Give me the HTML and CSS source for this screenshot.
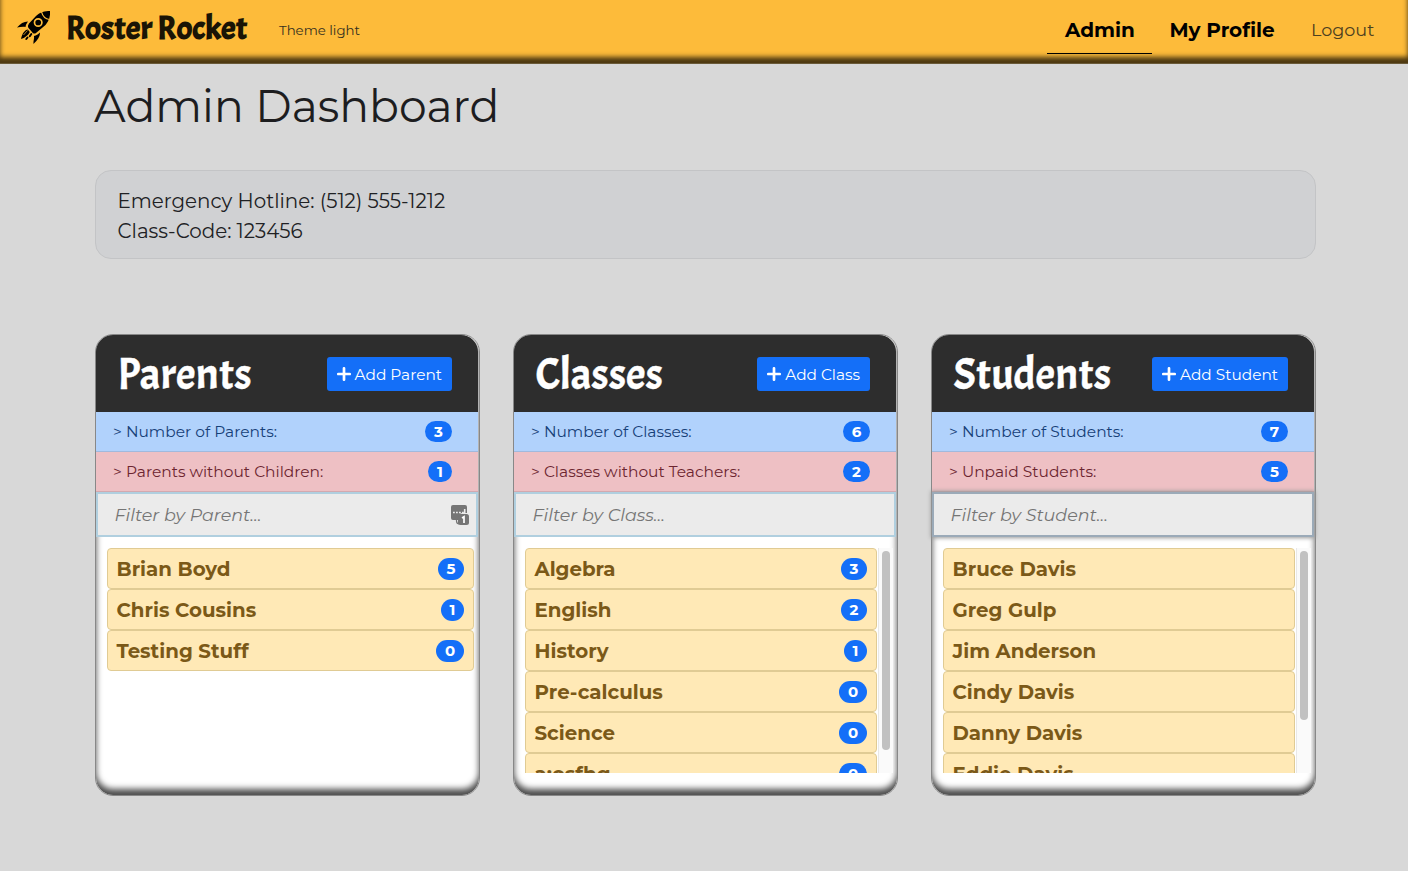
FILE: index.html
```html
<!DOCTYPE html>
<html lang="en">
<head>
<meta charset="utf-8">
<title>Roster Rocket</title>
<link rel="stylesheet" href="styles.css">
</head>
<body>
<svg width="0" height="0" class="defs">
  <symbol id="plus" viewBox="0 0 14 14"><path d="M7 1.3v11.400M1.300 7h11.400" fill="none" stroke="currentColor" stroke-width="2.700" stroke-linecap="round"/></symbol>
</svg>
<header class="navbar">
  <svg class="rocket" viewBox="0 0 34 34">
    <path d="M33 0C33.500 5 32 10 28.500 14L19 22C17.500 23.200 16 22.500 15 21L11.500 17C10.500 15.500 11 14 12 12.500L19 5C23 1 28 0 33 0Z"/>
    <path d="M11 10.500C6.500 10.500 3.500 12.500 0 16.500C3 16 6 15.300 8.500 16C8.800 14 9.500 12.500 11 10.500Z"/>
    <path d="M23 21.500C23 26 20.500 29 16.500 33C16 30.500 17.500 27.500 17 25C19.500 24.300 21 23.300 23 21.500Z"/>
    <path d="M10.800 18.600C8 19 5 22.500 4 28C8 26.800 11 24.500 12.800 21Z"/>
    <path d="M14.300 23L12.800 25.200M10.500 26.500L9.300 28" stroke="#000" stroke-width="2" stroke-linecap="round"/>
    <path d="M10.500 19.500L6.500 24" stroke="#fdbb3a" stroke-width=".7"/>
    <circle cx="21.200" cy="11.500" r="3.700" fill="none" stroke="#fdbb3a" stroke-width="1.700"/>
    <path d="M24.500 .8C25.500 4.500 28.500 8 32.500 8.500" fill="none" stroke="#fdbb3a" stroke-width="1.200"/>
  </svg>
  <span class="brand">Roster Rocket</span>
  <span class="theme">Theme light</span>
  <nav class="nav">
    <a class="nav-link active">Admin</a>
    <a class="nav-link profile">My Profile</a>
    <a class="nav-link logout">Logout</a>
  </nav>
</header>
<main class="container">
  <h1>Admin Dashboard</h1>
  <section class="info">
    <div>Emergency Hotline: (512) 555-1212</div>
    <div>Class-Code: 123456</div>
  </section>
  <div class="cards">
    <section class="card">
      <div class="card-head"><h2>Parents</h2><button><svg><use href="#plus"/></svg><span>Add Parent</span></button></div>
      <div class="stat blue"><span>&gt; Number of Parents:</span><b class="badge">3</b></div>
      <div class="stat red"><span>&gt; Parents without Children:</span><b class="badge one">1</b></div>
      <div class="filter"><span>Filter by Parent...</span>
        <svg class="keys" viewBox="0 0 18 20"><path d="M2 0h12q2 0 2 2v6h-5q-2 0-2 2v5H2q-2 0-2-2V2q0-2 2-2Z" fill="#757575"/><rect x="7" y="9" width="11" height="11" rx="2.500" fill="#757575"/><path d="M5.500 14.500V16q0 3 3 3" fill="none" stroke="#757575" stroke-width="1.200"/><path d="M2 7.500h1.800M5 7.500h1.800M8 7.500h1.800M11 7.500h1.800M13.700 4v4.500" stroke="#ebebeb" stroke-width="1.600"/><path d="M11 13l2-1.200V18" fill="none" stroke="#fff" stroke-width="1.700"/></svg>
      </div>
      <div class="list">
        <div class="item"><span>Brian Boyd</span><b class="badge">5</b></div>
        <div class="item"><span>Chris Cousins</span><b class="badge one">1</b></div>
        <div class="item"><span>Testing Stuff</span><b class="badge zero">0</b></div>
      </div>
    </section>
    <section class="card">
      <div class="card-head"><h2>Classes</h2><button><svg><use href="#plus"/></svg><span>Add Class</span></button></div>
      <div class="stat blue"><span>&gt; Number of Classes:</span><b class="badge">6</b></div>
      <div class="stat red"><span>&gt; Classes without Teachers:</span><b class="badge">2</b></div>
      <div class="filter"><span>Filter by Class...</span></div>
      <div class="list scroll">
        <div class="items">
          <div class="item"><span>Algebra</span><b class="badge">3</b></div>
          <div class="item"><span>English</span><b class="badge">2</b></div>
          <div class="item"><span>History</span><b class="badge one">1</b></div>
          <div class="item"><span>Pre-calculus</span><b class="badge zero">0</b></div>
          <div class="item"><span>Science</span><b class="badge zero">0</b></div>
          <div class="item"><span>a;osfhg</span><b class="badge zero">0</b></div>
        </div>
        <div class="track"><div class="thumb"></div></div>
      </div>
    </section>
    <section class="card">
      <div class="card-head"><h2>Students</h2><button><svg><use href="#plus"/></svg><span>Add Student</span></button></div>
      <div class="stat blue"><span>&gt; Number of Students:</span><b class="badge">7</b></div>
      <div class="stat red"><span>&gt; Unpaid Students:</span><b class="badge">5</b></div>
      <div class="filter focus"><span>Filter by Student...</span></div>
      <div class="list scroll">
        <div class="items">
          <div class="item"><span>Bruce Davis</span></div>
          <div class="item"><span>Greg Gulp</span></div>
          <div class="item"><span>Jim Anderson</span></div>
          <div class="item"><span>Cindy Davis</span></div>
          <div class="item"><span>Danny Davis</span></div>
          <div class="item"><span>Eddie Davis</span></div>
        </div>
        <div class="track"><div class="thumb short"></div></div>
      </div>
    </section>
  </div>
</main>
</body>
</html>
```
FILE: styles.css
```css
* { box-sizing: border-box; }
body { margin: 0; height: 871px; overflow: hidden; background: #d8d8d8; color: #212529; font-family: Montserrat, Inter, sans-serif; white-space: nowrap; }
.defs { display: block; height: 0; }
.navbar { display: flex; height: 64px; padding: 0 16px 0 17px; background: #fdbb3a; border-bottom: 1px solid #6a5a38; box-shadow: inset 0 -6px 5px rgba(0,0,0,.7); }
.rocket { width: 34px; height: 34px; margin-top: 11px; }
.brand { width: 180px; margin: 6px 33px 0 15px; font: 700 33px/44px Acme, Lato, sans-serif; color: #1a1405; }
.theme { margin-top: 20px; font-size: 13.3px; line-height: 20px; color: #35301f; }
.nav { display: flex; margin-left: auto; height: 54px; }
.nav-link { padding: 15px 18px 0; font-size: 20px; line-height: 30px; font-weight: 700; color: #000; }
.nav-link.active { width: 105px; border-bottom: 1px solid #000; }
.nav-link.profile { width: 142px; padding-left: 17.5px; }
.nav-link.logout { width: 98px; padding-left: 17px; font-size: 17.6px; font-weight: 400; color: #4d401f; }
.container { padding: 0 92px 0 95px; }
h1 { margin: 14px 0 36px -1px; font-size: 44.1px; line-height: 56px; font-weight: 400; color: #1d1d1f; }
.info { height: 89px; padding: 15px 21.5px; border: 1px solid #c3c4c6; border-radius: 16px; background: #d0d1d3; font-size: 19.85px; line-height: 30px; color: #202124; }
.cards { display: grid; grid-template-columns: repeat(3, 385px); gap: 33px; margin-top: 75px; }
.card { display: flex; flex-direction: column; height: 462px; padding-right: 1px; border: 1px solid #888; border-radius: 18px; background: #fff; box-shadow: inset 0 -6px 6px rgba(0,0,0,.7); }
.card-head { display: flex; justify-content: space-between; height: 77px; padding: 22px 26px 0 22px; border-radius: 17px 17px 0 0; background: #2d2d2d; }
h2 { margin: -5px 0 0 -.5px; font: 400 43.9px/46px Acme, Lato, sans-serif; color: #fff; -webkit-text-stroke: .4px #fff; }
button { display: flex; align-items: center; gap: 4px; height: 34px; padding: 1px 10px 0; border: 0; border-radius: 3px; background: #146ff8; color: #fff; font: 400 15.35px/33px Montserrat, Inter, sans-serif; }
button svg { width: 14px; height: 14px; margin-top: -1px; }
.stat { display: flex; align-items: center; justify-content: space-between; height: 40px; padding: 0 26px 0 17px; font-size: 15.45px; }
.blue { background: #b1d2fc; border-bottom: 1px solid #a1b9dd; color: #164078; }
.red { background: #eec0c4; border-bottom: 1px solid #d3a9af; color: #6c2530; }
.badge { display: flex; align-items: center; justify-content: center; width: 27px; height: 21px; border-radius: 11px; background: #146ff8; color: #fff; font-size: 15px; font-weight: 700; }
.badge.one { width: 24px; }
.badge.zero { width: 28px; }
.filter { display: flex; align-items: center; justify-content: space-between; height: 45px; padding: 0 7px 0 16.5px; border: 2px solid #b0cfdf; background: #ebebeb; color: #757575; font-size: 17.5px; font-style: italic; font-weight: 400; }
.filter.focus { border-color: #9baab8; box-shadow: 0 0 4px 1px #999; }
.keys { width: 18px; height: 20px; }
.list { height: 225px; margin: 11px 4px 0 11px; overflow: hidden; }
.item { display: flex; align-items: center; justify-content: space-between; height: 41px; padding: 0 9px 0 8.500px; border: 1px solid #e0cb94; border-radius: 4px; background: #ffe9b6; color: #7b5918; font-size: 19.8px; font-weight: 700; }
.item .badge { width: 26px; height: 22px; }
.item .badge.one { width: 23px; }
.item .badge.zero { width: 28px; }
.scroll { display: flex; margin-right: 2px; }
.items { width: 352px; flex: none; }
.track { width: 15px; flex: none; margin-left: 1px; padding: 3px; border-left: 1px solid #e8e8e8; background: #fafafa; }
.thumb { width: 8px; height: 199px; border-radius: 4px; background: #c1c1c1; }
.thumb.short { height: 169px; }
```
